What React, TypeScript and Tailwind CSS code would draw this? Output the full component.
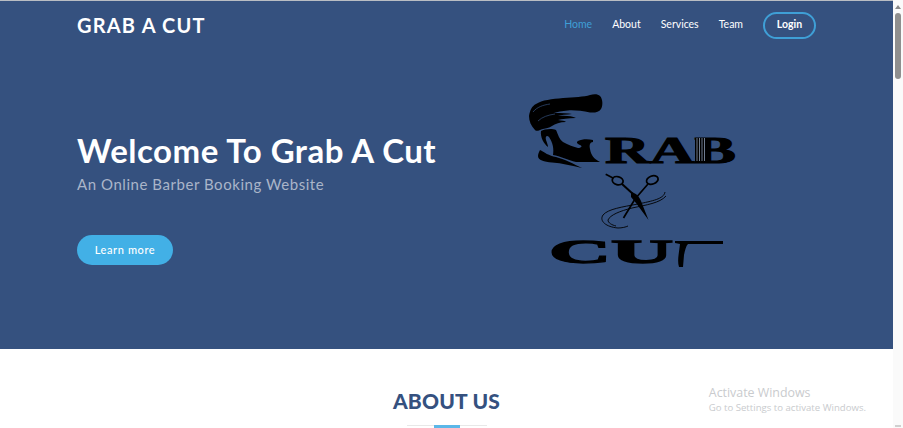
const navLinks = ['Home', 'About', 'Services', 'Team'];

function Logo() {
  return (
    <svg width="214" height="176" viewBox="0 0 214 176" className="block overflow-visible">
      {/* hair */}
      <path
        d="M1 21 C2 15 4 11 8 9 C14 5 24 4 35 3 C46 2 56 2 62 0 C66 -1 70 -1 72 1 C75 4 75 11 73 14 C71 17 67 18 62 17.5 C54 16 46 15 40 15.5 C34 16 29 17 26 18 C34 18 40 18 44 19 C38 19.5 33 20 30 21 C38 20.5 44 21 48 23 C40 23 34 24 30 25 C34 25.5 37 26 38 27 C32 27 27 29 24 31 C21 33 18 33 15 34 C11 35 9 37 7 35 C3 31 1 26 1 21 Z"
        fill="#000"
      />
      <path d="M5 17 C9 12 15 10 22 9 M10 26 C14 22 20 20 27 19" stroke="#35517f" strokeWidth="0.7" fill="none" />
      {/* face shadow, hair falling down the neck */}
      <path
        d="M13 36 C16 34 24 33 28 35 C30 39 31 44 35 47 C40 50 46 52 50 53 C53 53 55 51 52 50 C49 49 48 47 50 46 C54 44 60 44 65 45 L65 47 C62 47 61 50 62 54 C63 60 66 64 72 67 L48 67 C40 65 32 61 25 60 C26 54 25 48 21 42 C19 40 17 41 18 45 C19 48 20 50 20 52 C16 49 12 42 13 36 Z"
        fill="#000"
      />
      {/* swoosh under the face */}
      <path d="M12 55 C16 57 21 61 28 62 C36 64 46 69 54 73 C44 71 34 68 24 67.5 C16 67 10 65 10 61 C10 59 11 57 12 55 Z" fill="#000" />
      <text
        x="77"
        y="68"
        fontFamily="'Liberation Serif', serif"
        fontWeight="700"
        fontSize="37"
        textLength="131"
        lengthAdjust="spacingAndGlyphs"
        fill="#000"
        stroke="#000"
        strokeWidth="1.1"
      >
        RAB
      </text>
      {/* comb teeth on the B */}
      <rect x="167" y="43" width="12" height="25" fill="#000" />
      <path d="M169 43 V66 M171.5 43 V66 M174 43 V66 M176.5 43 V66" stroke="#8c9ab3" strokeWidth="0.8" fill="none" />
      {/* scissors */}
      <g fill="none" stroke="#000">
        <ellipse cx="89.7" cy="85.7" rx="5.5" ry="4" strokeWidth="1.8" transform="rotate(15 89.7 85.7)" />
        <ellipse cx="124.3" cy="85" rx="6" ry="4" strokeWidth="1.8" transform="rotate(-20 124.3 85)" />
        <path d="M77.7 79.3 L85 83" strokeWidth="1.6" />
        <path d="M94 89 L105 99" strokeWidth="2" />
        <path d="M120 89 L107 104 L95.5 123" strokeWidth="1.7" />
        <path d="M137 97 C136 104 124 106 110 109 C94 112 80 114 75 120 C71 126 78 132 90 133 C94 133 98 132 100 131" strokeWidth="0.9" />
        <path d="M138 101 C132 108 118 110 104 113 C92 116 82 120 80 125 C80 128 84 130 88 131" strokeWidth="0.9" />
      </g>
      <path d="M103 97 C108 98 111 101 113 106 L120.5 125 L108 108 L103 102 Z" fill="#000" />
      {/* cut */}
      <text
        x="21"
        y="168"
        fontFamily="'Liberation Serif', serif"
        fontWeight="700"
        fontSize="33"
        textLength="124"
        lengthAdjust="spacingAndGlyphs"
        fill="#000"
        stroke="#000"
        strokeWidth="1.3"
      >
        CU
      </text>
      <path d="M147 146 H195 V149 H160 C158 151 157 155 156 160 L155 172 L151 172 C149 166 151 158 152 149 L147 148 Z" fill="#000" />
    </svg>
  );
}

export default function App() {
  return (
    <div className="flex h-[428px] w-[903px] overflow-hidden bg-white font-['Lato',sans-serif]">
      <main className="flex min-w-0 flex-1 flex-col">
        <section className="h-[349px] shrink-0 border-t border-[#b9bdc3] bg-[#35517f]">
          <header className="flex h-[48px] items-center pl-[77px] pr-[77px]">
            <a className="mt-[-1px] text-[20px] font-bold leading-none tracking-[1.2px] text-white">GRAB A CUT</a>
            <nav className="ml-auto flex items-center gap-[20px] text-[10.5px] text-white">
              {navLinks.map((link) => (
                <a key={link} className={link === 'Home' ? 'text-[#3f9fd6]' : ''}>
                  {link}
                </a>
              ))}
              <a className="flex h-[27px] w-[53px] items-center justify-center rounded-full border-2 border-[#3f9fd6] font-bold">
                Login
              </a>
            </nav>
          </header>
          <div className="flex pl-[77px]">
            <div className="w-[451px] pt-[82px]">
              <h1 className="text-[33px] font-bold leading-[38px] tracking-[0.5px] text-white">Welcome To Grab A Cut</h1>
              <p className="mt-[5px] text-[15px] leading-[20px] tracking-[0.55px] text-[#aab5c9]">An Online Barber Booking Website</p>
              <a className="mt-[41px] flex h-[30px] w-[96px] items-center justify-center rounded-full bg-[#42b0e6] text-[11px] font-medium tracking-[0.6px] text-white">
                Learn more
              </a>
            </div>
            <div className="pt-[46px]">
              <Logo />
            </div>
          </div>
        </section>
        <section className="flex flex-1 items-start pl-[393px] pr-[27px] pt-[40px]">
          <div className="flex w-[107px] flex-col items-center">
            <h2 className="whitespace-nowrap text-[21px] font-black leading-[24px] tracking-[0.2px] text-[#35517f]">ABOUT US</h2>
            <div className="mt-[12px] flex h-[3px] w-[80px] items-start justify-center border-t border-[#e8e8e8]">
              <div className="mt-[-1px] h-[3px] w-[26px] bg-[#5bb7e8]" />
            </div>
          </div>
          <div className="ml-auto mt-[-4px] font-['Open_Sans',sans-serif] text-[#c9cbce]">
            <p className="text-[12.4px] leading-[16px]">Activate Windows</p>
            <p className="text-[9.6px] leading-[14px]">Go to Settings to activate Windows.</p>
          </div>
        </section>
      </main>
      <aside className="flex w-[10px] shrink-0 flex-col items-center bg-[#fafafa]">
        <div className="mt-[5px] h-0 w-0 border-x-[3px] border-b-[4px] border-x-transparent border-b-[#8a8a8a]" />
        <div className="mt-[4px] h-[66px] w-[6px] rounded-full bg-[#8f8f8f]" />
        <div className="mt-auto mb-[1px] h-[2px] w-[6px] bg-[#d0d0d0]" />
      </aside>
    </div>
  );
}
